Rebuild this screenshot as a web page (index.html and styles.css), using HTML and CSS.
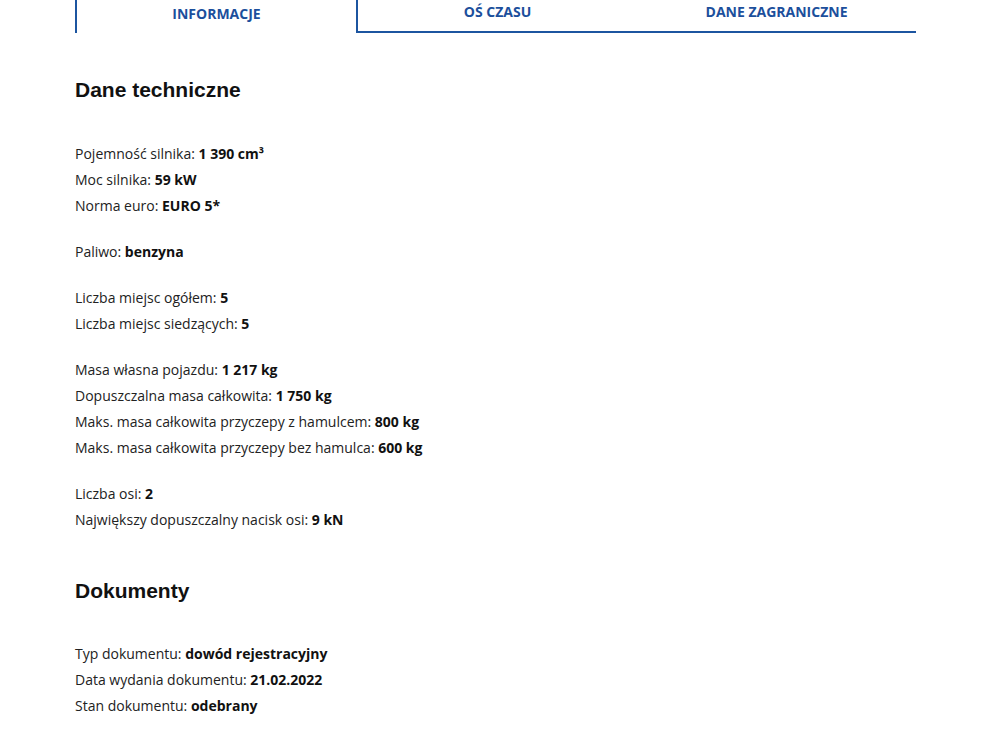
FILE: index.html
```html
<!DOCTYPE html>
<html>
  <head>
    <title>Informacje o pojeździe</title>
    <link rel="stylesheet" href="styles.css">
  </head>
  <body>
    <div class="container">
      <nav class="tabs">
        <a class="tab active">INFORMACJE</a>
        <a class="tab">OŚ CZASU</a>
        <a class="tab">DANE ZAGRANICZNE</a>
      </nav>

      <section class="sekcja">
        <h2>Dane techniczne</h2>
        <div class="grupa">
          <p>Pojemność silnika: <b>1 390 cm³</b></p>
          <p>Moc silnika: <b>59 kW</b></p>
          <p>Norma euro: <b>EURO 5*</b></p>
        </div>
        <div class="grupa">
          <p>Paliwo: <b>benzyna</b></p>
        </div>
        <div class="grupa">
          <p>Liczba miejsc ogółem: <b>5</b></p>
          <p>Liczba miejsc siedzących: <b>5</b></p>
        </div>
        <div class="grupa">
          <p>Masa własna pojazdu: <b>1 217 kg</b></p>
          <p>Dopuszczalna masa całkowita: <b>1 750 kg</b></p>
          <p>Maks. masa całkowita przyczepy z hamulcem: <b>800 kg</b></p>
          <p>Maks. masa całkowita przyczepy bez hamulca: <b>600 kg</b></p>
        </div>
        <div class="grupa">
          <p>Liczba osi: <b>2</b></p>
          <p>Największy dopuszczalny nacisk osi: <b>9 kN</b></p>
        </div>
      </section>

      <section class="sekcja">
        <h2>Dokumenty</h2>
        <div class="grupa">
          <p>Typ dokumentu: <b>dowód rejestracyjny</b></p>
          <p>Data wydania dokumentu: <b>21.02.2022</b></p>
          <p>Stan dokumentu: <b>odebrany</b></p>
        </div>
      </section>
    </div>
  </body>
</html>
```

FILE: styles.css
```css
body{
  margin: 0;
  background-color: #fff;
  color: #222;
  font-family: "Open Sans", sans-serif;
  font-size: 14px;
}
.container{
  width: 841px;
  margin-left: 75px;
}
.tabs{
  display: flex;
  height: 33px;
}
.tab{
  flex: 1;
  box-sizing: border-box;
  text-align: center;
  font-weight: 700;
  font-size: 14px;
  line-height: 20px;
  color: #1c4f9c;
  padding-top: 2px;
  border-bottom: 2px solid #1c55a0;
}
.tab.active{
  padding-top: 4px;
  border-bottom: none;
  border-left: 2px solid #1c55a0;
  border-right: 2px solid #1c55a0;
}
.sekcja h2{
  font-family: "Liberation Sans", Arial, sans-serif;
  font-size: 21px;
  line-height: 24px;
  font-weight: 700;
  color: #111;
  margin: 45px 0 39px 0;
}
.sekcja + .sekcja h2{
  margin-top: 46px;
  margin-bottom: 38px;
}
.grupa{
  margin-bottom: 20px;
}
.grupa p{
  margin: 0;
  line-height: 26px;
}
.grupa b{
  color: #111;
}
```
